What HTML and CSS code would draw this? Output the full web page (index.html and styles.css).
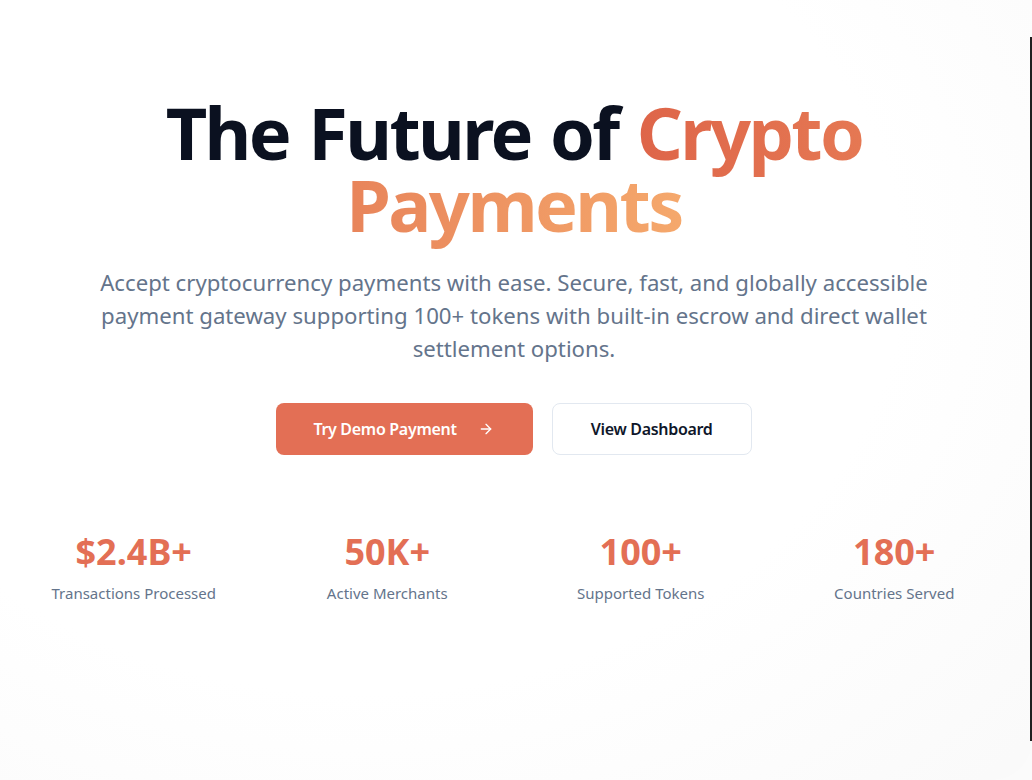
FILE: index.html
```html
<!DOCTYPE html>
<html lang="en">
<head>
<meta charset="utf-8">
<title>The Future of Crypto Payments</title>
<link rel="stylesheet" href="styles.css">
</head>
<body>
<div class="page">
  <main class="hero">
    <h1 class="title">The Future of <span class="accent accent-1">Crypto</span> <span class="accent accent-2">Payments</span></h1>
    <p class="lead">Accept cryptocurrency payments with ease. Secure, fast, and globally accessible payment gateway supporting 100+ tokens with built-in escrow and direct wallet settlement options.</p>
    <div class="actions">
      <a class="btn btn-primary" href="#">Try Demo Payment
        <svg class="arrow" width="16" height="16" viewBox="0 0 24 24" fill="none" stroke="currentColor" stroke-width="2" stroke-linecap="round" stroke-linejoin="round"><path d="M5 12h14"/><path d="M12 5l7 7-7 7"/></svg>
      </a>
      <a class="btn btn-secondary" href="#">View Dashboard</a>
    </div>
    <section class="stats">
      <div class="stat"><div class="num">$2.4B+</div><div class="label">Transactions Processed</div></div>
      <div class="stat"><div class="num">50K+</div><div class="label">Active Merchants</div></div>
      <div class="stat"><div class="num">100+</div><div class="label">Supported Tokens</div></div>
      <div class="stat"><div class="num">180+</div><div class="label">Countries Served</div></div>
    </section>
  </main>
  <div class="frame-edge"></div>
</div>
</body>
</html>
```

FILE: styles.css
```css
* { box-sizing: border-box; }
html, body { margin: 0; padding: 0; }
body {
  font-family: "Noto Sans", "Open Sans", sans-serif;
  background: #fbfbfb;
  width: 1032px;
  height: 780px;
  overflow: hidden;
}
.page {
  position: relative;
  width: 1032px;
  height: 780px;
  background: radial-gradient(ellipse 900px 700px at 35% 35%, #ffffff 60%, #fafafa 100%);
  border-radius: 0 0 40px 0;
}
.hero {
  width: 1028px;
  padding-top: 96px;
  display: flex;
  flex-direction: column;
  align-items: center;
  text-align: center;
}
.title {
  margin: 0;
  font-size: 72px;
  line-height: 72px;
  font-weight: 700;
  color: #0b1120;
  letter-spacing: -2.6px;
  word-spacing: 3px;
  max-width: 760px;
}
.accent {
  -webkit-background-clip: text;
  background-clip: text;
  color: transparent;
}
.accent-1 { background-image: linear-gradient(90deg, #de6549 0%, #e57853 100%); }
.accent-2 { background-image: linear-gradient(90deg, #e8845a 0%, #f5a86c 100%); }
.lead {
  margin: 26px 0 0;
  max-width: 896px;
  font-size: 22.2px;
  line-height: 33px;
  color: #64748b;
}
.actions {
  margin-top: 38px;
  display: flex;
  gap: 19px;
}
.btn {
  display: flex;
  align-items: center;
  height: 52px;
  border-radius: 8px;
  font-size: 16px;
  font-weight: 600;
  letter-spacing: -0.3px;
  text-decoration: none;
}
.btn-primary {
  background: #e36f55;
  color: #ffffff;
  padding: 0 39px 0 37px;
  gap: 21px;
}
.btn-secondary {
  background: #ffffff;
  color: #0f172a;
  border: 1px solid #e2e8f0;
  padding: 0 38px;
}
.arrow { display: block; }
.stats {
  margin-top: 77px;
  width: 982px;
  display: grid;
  grid-template-columns: repeat(4, 1fr);
  gap: 32px;
}
.stat { display: flex; flex-direction: column; align-items: center; }
.num {
  font-size: 36px;
  line-height: 40px;
  font-weight: 700;
  color: #e36f55;
}
.label {
  margin-top: 9px;
  font-size: 15px;
  line-height: 24px;
  color: #64748b;
}
.frame-edge {
  position: absolute;
  right: 0;
  top: 37px;
  width: 2px;
  height: 704px;
  background: #1f1f1f;
}
```
